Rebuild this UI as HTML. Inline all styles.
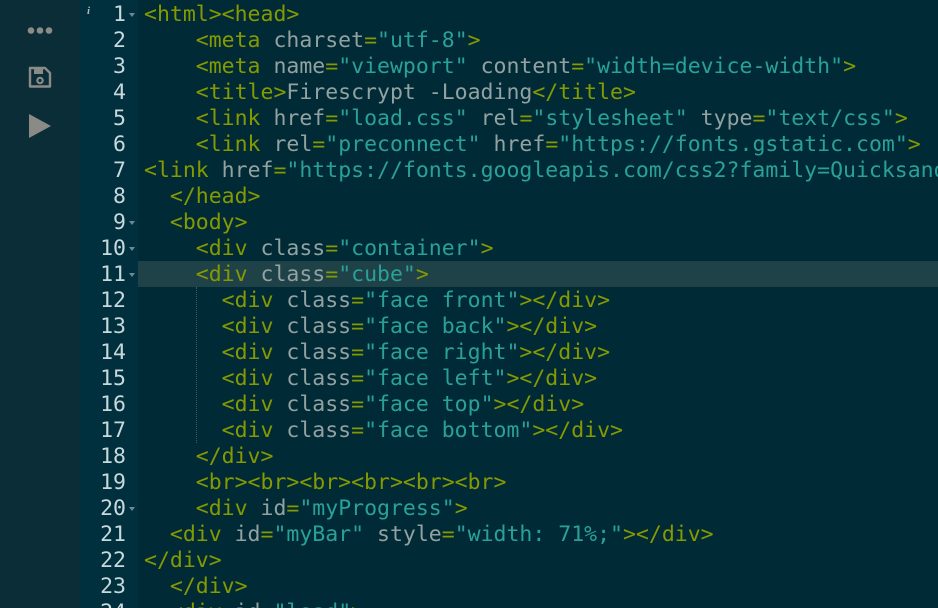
<!DOCTYPE html>
<html style="overflow:hidden;width:938px;height:608px"><head><meta charset="utf-8"><style>
body{margin:0;width:938px;height:608px;overflow:hidden;background:#002b36;position:relative;font-family:"DejaVu Sans Mono","Liberation Mono",monospace;}
#side{position:absolute;left:0;top:0;width:80px;height:608px;background:#0b2d38;}
#gut{position:absolute;left:80px;top:0;width:58px;height:608px;background:#00303d;}
#hl2{position:absolute;left:138px;top:261px;width:800px;height:26px;background:#1f4249;}
.ln{position:absolute;left:80px;width:46px;text-align:right;font-size:21.5px;color:#c8d8dc;line-height:26px;height:606px;overflow:hidden;}
.fa{position:absolute;left:129px;width:0;height:0;border-left:3.5px solid transparent;border-right:3.5px solid transparent;border-top:4px solid #6c8a92;}
.code{position:absolute;left:144px;top:2px;width:794px;height:606px;overflow:hidden;font-size:21.5px;line-height:26px;white-space:pre;color:#93a1a1;}
.t{color:#859900}.s{color:#2aa198}
.guide{position:absolute;left:196px;top:287px;height:156px;border-left:1px dotted #3d5a62;}
</style></head><body>
<div id="side">
<svg width="80" height="160" style="position:absolute;left:0;top:0">
<circle cx="31" cy="30.5" r="3.3" fill="#8a8a86"/><circle cx="40" cy="30.5" r="3.3" fill="#8a8a86"/><circle cx="49" cy="30.5" r="3.3" fill="#8a8a86"/>
<path d="M30 68h15l5 5v13.5h-20z" fill="none" stroke="#8a8a86" stroke-width="2.4" stroke-linejoin="round"/>
<rect x="34" y="69" width="9" height="5" fill="#8a8a86"/>
<circle cx="40" cy="80.5" r="2.7" fill="none" stroke="#8a8a86" stroke-width="2.2"/>
<path d="M29 114L51 126L29 138Z" fill="#8a8a86"/>
</svg></div>
<div id="gut"></div>
<div id="hl2"></div>
<div style="position:absolute;left:87px;top:5px;font-size:11px;font-style:italic;color:#b0b8bb;font-family:'Liberation Serif',serif;font-weight:bold">i</div>
<div class="ln" style="top:2px">1<br>2<br>3<br>4<br>5<br>6<br>7<br>8<br>9<br>10<br>11<br>12<br>13<br>14<br>15<br>16<br>17<br>18<br>19<br>20<br>21<br>22<br>23<br>24</div>
<div class="fa" style="top:13px"></div>
<div class="fa" style="top:221px"></div>
<div class="fa" style="top:247px"></div>
<div class="fa" style="top:273px"></div>
<div class="fa" style="top:507px"></div>
<div class="guide"></div>
<div class="code"><span class="t">&lt;html&gt;&lt;head&gt;</span>
    <span class="t">&lt;meta</span> charset<span class="t">=</span><span class="s">"utf-8"</span><span class="t">&gt;</span>
    <span class="t">&lt;meta</span> name<span class="t">=</span><span class="s">"viewport"</span> content<span class="t">=</span><span class="s">"width=device-width"</span><span class="t">&gt;</span>
    <span class="t">&lt;title&gt;</span>Firescrypt -Loading<span class="t">&lt;/title&gt;</span>
    <span class="t">&lt;link</span> href<span class="t">=</span><span class="s">"load.css"</span> rel<span class="t">=</span><span class="s">"stylesheet"</span> type<span class="t">=</span><span class="s">"text/css"</span><span class="t">&gt;</span>
    <span class="t">&lt;link</span> rel<span class="t">=</span><span class="s">"preconnect"</span> href<span class="t">=</span><span class="s">"https://fonts.gstatic.com"</span><span class="t">&gt;</span>
<span class="t">&lt;link</span> href<span class="t">=</span><span class="s">"https://fonts.googleapis.com/css2?family=Quicksand:wght@500"</span>
  <span class="t">&lt;/head&gt;</span>
  <span class="t">&lt;body&gt;</span>
    <span class="t">&lt;div</span> class<span class="t">=</span><span class="s">"container"</span><span class="t">&gt;</span>
    <span class="t">&lt;div</span> class<span class="t">=</span><span class="s">"cube"</span><span class="t">&gt;</span>
      <span class="t">&lt;div</span> class<span class="t">=</span><span class="s">"face front"</span><span class="t">&gt;&lt;/div&gt;</span>
      <span class="t">&lt;div</span> class<span class="t">=</span><span class="s">"face back"</span><span class="t">&gt;&lt;/div&gt;</span>
      <span class="t">&lt;div</span> class<span class="t">=</span><span class="s">"face right"</span><span class="t">&gt;&lt;/div&gt;</span>
      <span class="t">&lt;div</span> class<span class="t">=</span><span class="s">"face left"</span><span class="t">&gt;&lt;/div&gt;</span>
      <span class="t">&lt;div</span> class<span class="t">=</span><span class="s">"face top"</span><span class="t">&gt;&lt;/div&gt;</span>
      <span class="t">&lt;div</span> class<span class="t">=</span><span class="s">"face bottom"</span><span class="t">&gt;&lt;/div&gt;</span>
    <span class="t">&lt;/div&gt;</span>
    <span class="t">&lt;br&gt;&lt;br&gt;&lt;br&gt;&lt;br&gt;&lt;br&gt;&lt;br&gt;</span>
    <span class="t">&lt;div</span> id<span class="t">=</span><span class="s">"myProgress"</span><span class="t">&gt;</span>
  <span class="t">&lt;div</span> id<span class="t">=</span><span class="s">"myBar"</span> style<span class="t">=</span><span class="s">"width: 71%;"</span><span class="t">&gt;&lt;/div&gt;</span>
<span class="t">&lt;/div&gt;</span>
  <span class="t">&lt;/div&gt;</span>
  <span class="t">&lt;div</span> id<span class="t">=</span><span class="s">"load"</span><span class="t">&gt;</span></div>
</body></html>
